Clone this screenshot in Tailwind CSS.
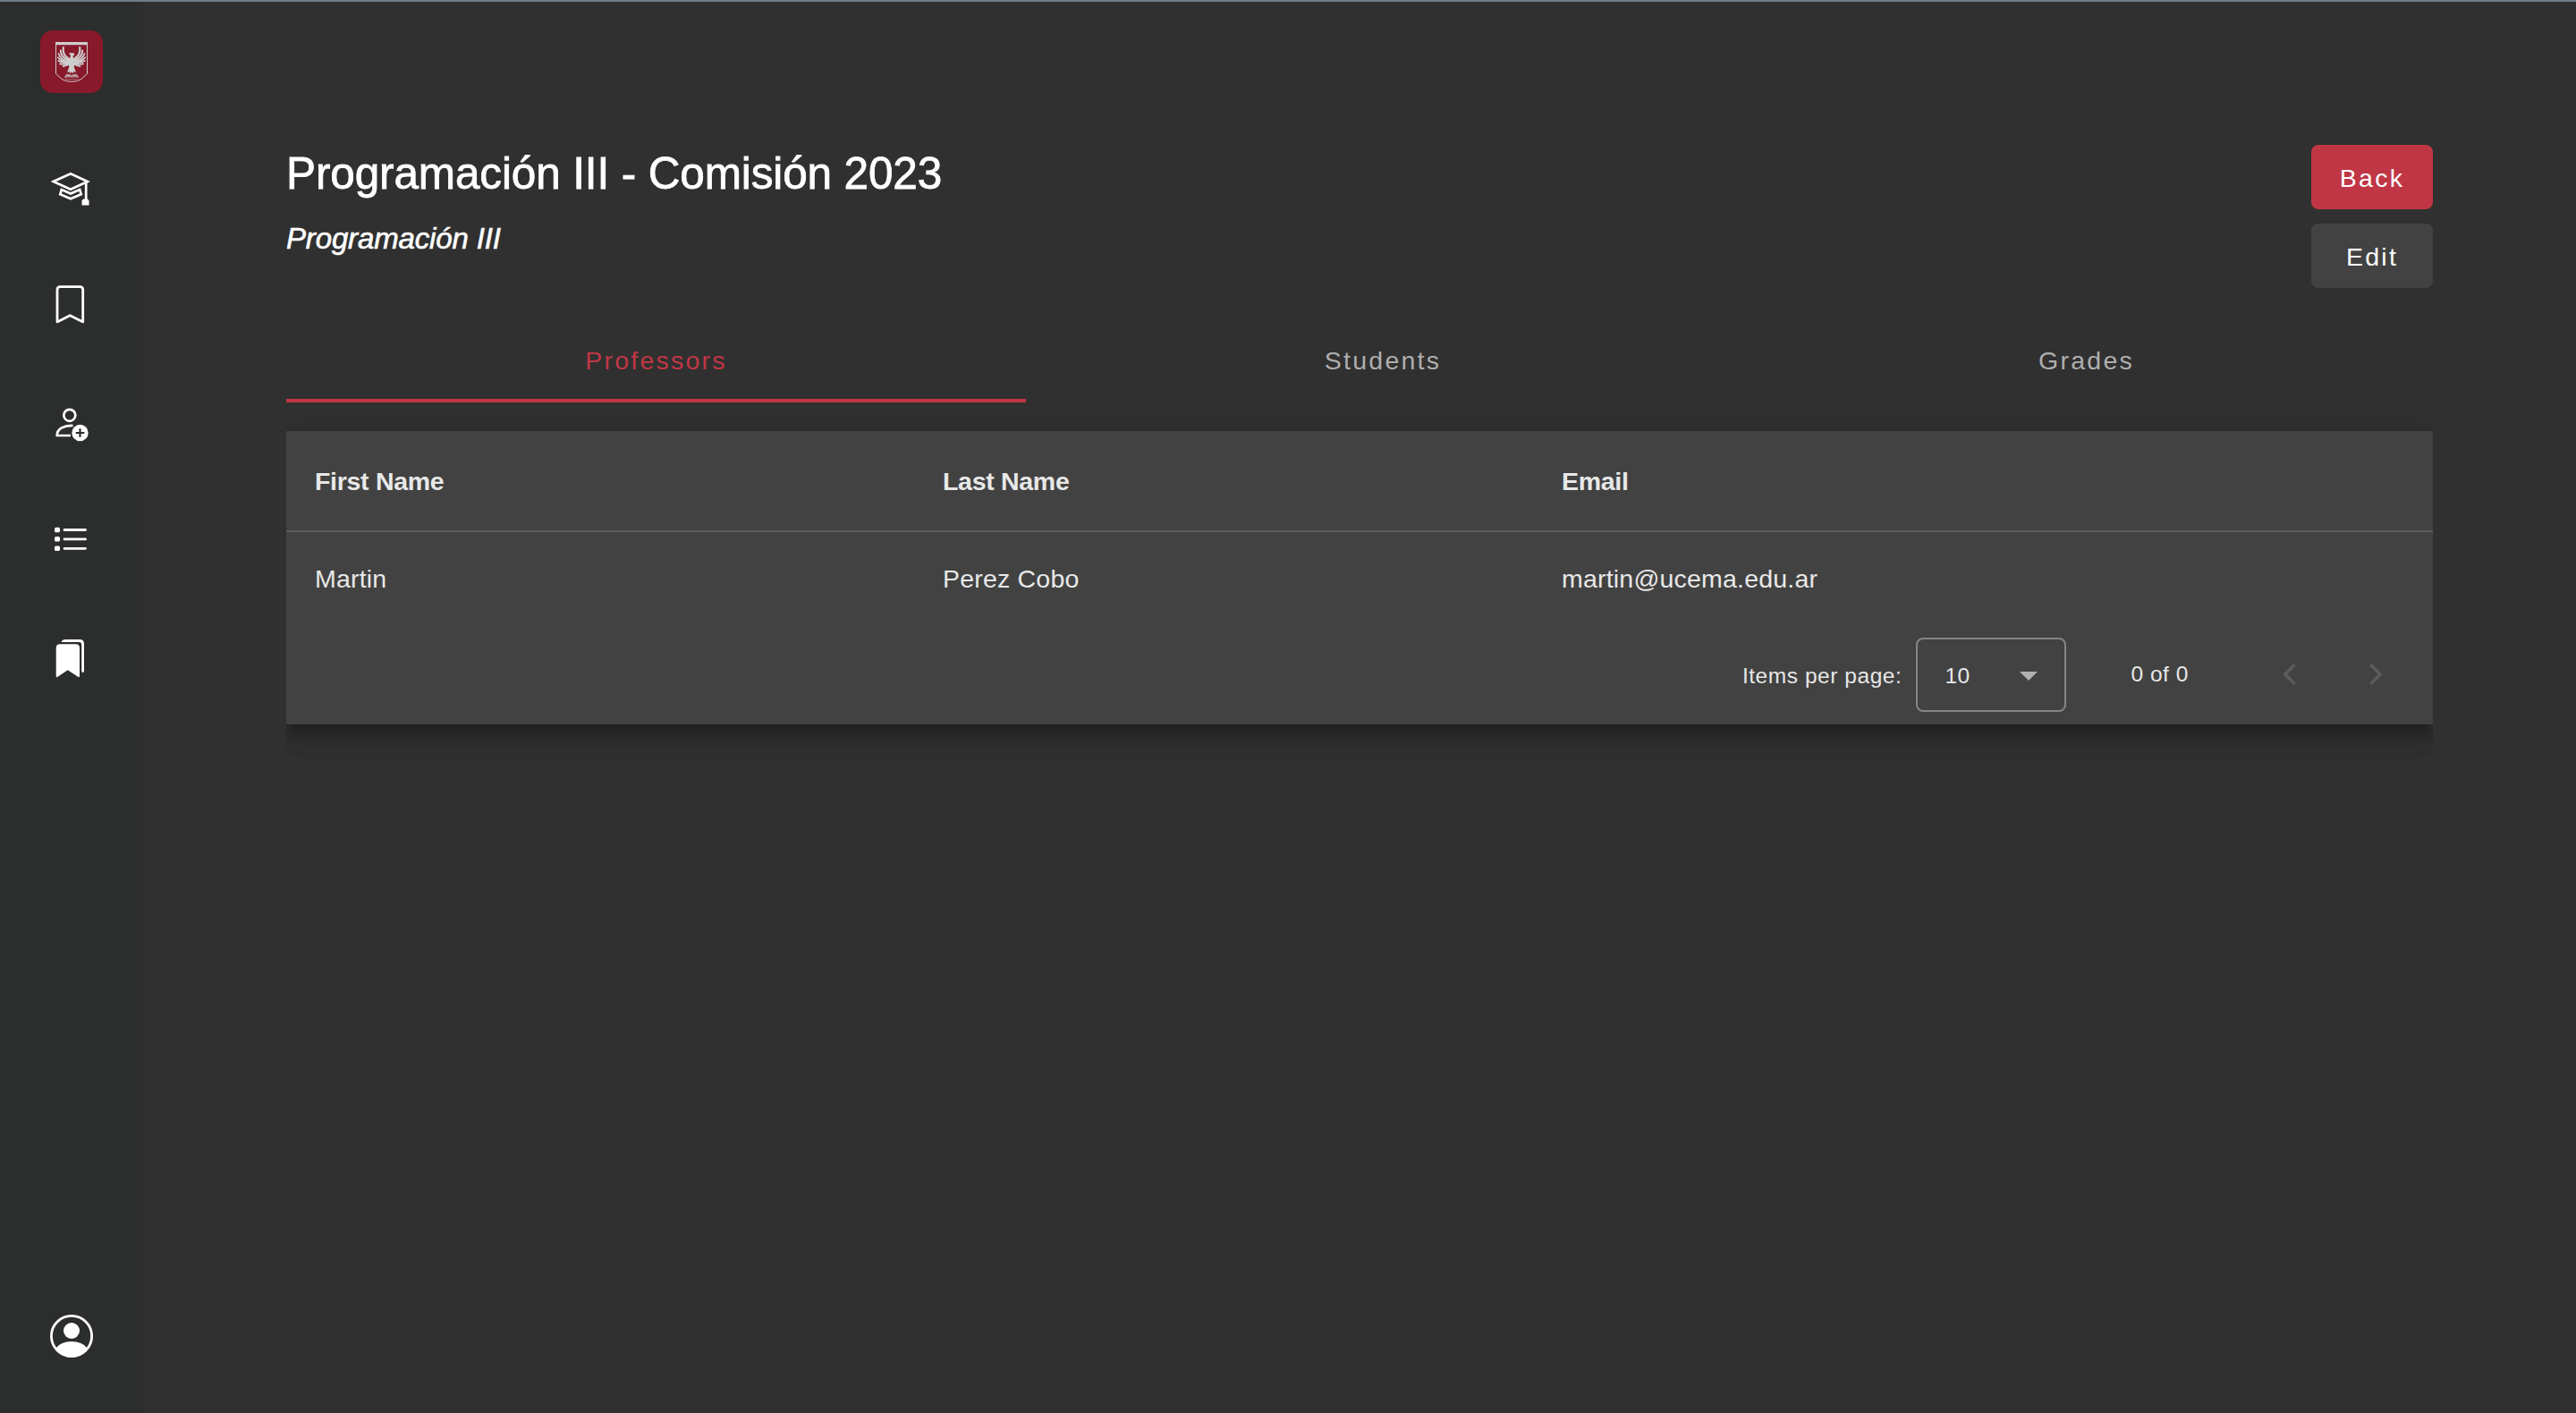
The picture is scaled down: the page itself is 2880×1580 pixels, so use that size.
<!DOCTYPE html>
<html lang="en">
<head>
<meta charset="utf-8">
<title>Programación III - Comisión 2023</title>
<script src="https://cdn.jsdelivr.net/npm/@tailwindcss/browser@4"></script>
</head>
<body class="bg-[#303030] text-white font-['Liberation_Sans',Arial,sans-serif]">
<div class="flex h-[1580px] w-[2880px] overflow-hidden border-t-2 border-[#6f7d86]">
  <aside class="flex w-40 shrink-0 flex-col items-center bg-[#2c2e2d] pt-8">
    <div class="flex size-[70px] items-center justify-center rounded-[14px] bg-[#87192a]">
      <svg class="h-[45px] w-9" viewBox="0 0 36 45" fill="#cecdcd">
        <defs>
          <g id="wing" fill="none" stroke="#cecdcd" stroke-width="1.7" stroke-linecap="round">
            <path d="M8.800 6Q7.500 14 14.500 18.500" stroke-width="2.200"/>
            <path d="M5.800 9.500Q5.500 16 14 20.500" stroke-width="2"/>
            <path d="M3.500 13Q5 19 14 22M2.800 17.200Q6 21.500 14 22.500M3.200 21Q8 23.800 14 23M5 24.400Q9 25.500 15 23.500M8.500 27.200Q12 26.800 16 24"/>
          </g>
        </defs>
        <path d="M.5.5h35v35L28 42q-4 2.300-10 2.300T8 42L.5 35.500z" fill="none" stroke="#cecdcd" stroke-width="1"/>
        <path d="M0 0h36v3.200H0z"/>
        <use href="#wing"/>
        <use href="#wing" transform="matrix(-1 0 0 1 36 0)"/>
        <path d="M14.500 13l2.500-1 4 .6v2.200l-1.500 1 .5 2.200 2.500 1.500-1.500 7.500-3 2-3-2-1.500-7.500 3-2 .3-3.200z"/>
        <path d="M16 26L13 34l2.500-1 .8 2 1.700-1.500 1.700 1.500.8-2 2.500 1L20 26z"/>
        <path d="M9.500 40l2.500-4q4-.6 6 1.200Q20 35.400 24 36l2.500 4q-5-1.200-8.500-.4-3.500-.8-8.500.4z" opacity=".7"/>
        <path d="M11 41.500h14" stroke="#cecdcd" stroke-width=".9" stroke-dasharray="2 .6" opacity=".6"/>
      </svg>
    </div>
    <svg class="mt-[87px] ml-[-3px] h-[40px] w-[44px]" viewBox="56.500 190.500 44 40" fill="none" stroke="#fff" stroke-width="2.700">
      <path d="M59 202.500L78.500 193.800 97.500 202.500 78.500 211.200z"/>
      <path d="M68.300 211.500l-1.500 5.200 11.700 5 11.700-5-1.500-5.200-10.200 4.600z"/>
      <path d="M95.700 203v20"/>
      <path d="M92.500 222h5l1.500 2v5h-8v-5z" fill="#fff" stroke="none"/>
    </svg>
    <svg class="mt-[87px] ml-[-4px] h-[44px] w-[34px]" viewBox="61 317.500 34 44" fill="none" stroke="#fff" stroke-width="2.800" stroke-linejoin="round">
      <path d="M64 359.400V323.500q0-3.300 3.300-3.300H89.400q3.300 0 3.300 3.300V359.400L78.300 352.200z"/>
    </svg>
    <svg class="mt-[94px] h-[40px] w-[40px]" viewBox="60.500 456 40 40" fill="none" stroke="#fff" stroke-width="2.700">
      <circle cx="78.300" cy="464.300" r="6.500"/>
      <path d="M79.500 487H64.300Q64 482 69 478.700 74.500 475.500 82 476"/>
      <circle cx="90" cy="484" r="9.200" fill="#fff" stroke="none"/>
      <path d="M90 479.200v9.600M85.200 484h9.600" stroke="#2c2e2d" stroke-width="2.200"/>
    </svg>
    <svg class="mt-[92px] ml-[-3px] h-[30px] w-[40px]" viewBox="59 588 40 30" fill="#fff" stroke="#fff">
      <g stroke="none"><rect x="61" y="589.700" width="6" height="5.600" rx="1.500"/><rect x="61" y="600" width="6" height="5.600" rx="1.500"/><rect x="61" y="610.400" width="6" height="5.600" rx="1.500"/></g>
      <path d="M72 592.500H95.500M72 602.900H95.500M72 613.300H95.500" stroke-width="2.800" stroke-linecap="round"/>
    </svg>
    <svg class="mt-[96px] ml-[-4px] h-[44px] w-[34px]" viewBox="61 714 34 44" fill="#fff">
      <path d="M62.700 756V724.500q0-4.300 4.300-4.300h17.700q4.300 0 4.300 4.300V756q0 1.500-1.500 1L75.700 749.300 64.200 757q-1.500.5-1.500-1z"/>
      <path d="M68.500 718q1-3 5-3h15.500q5 0 5 5v30q0 2-1.400 2t-1.400-2V721q0-3-3-3z"/>
    </svg>
    <svg class="mt-[711px] h-[50px] w-[50px]" viewBox="0 0 50 50">
      <circle cx="25" cy="25" r="22.600" fill="none" stroke="#fff" stroke-width="2.800"/>
      <circle cx="25" cy="19" r="9" fill="#fff"/>
      <path d="M7.500 38.500Q13 31 25 31t17.500 7.500Q36 49 25 49T7.500 38.500z" fill="#fff"/>
    </svg>
  </aside>
  <main class="flex-1 px-40 pt-40">
    <header class="flex justify-between">
      <div class="pt-1">
        <h1 class="text-[49.5px] leading-[56px] tracking-[-0.13px] [-webkit-text-stroke:0.8px_white]">Programación III - Comisión 2023</h1>
        <p class="mt-[27px] text-[33px] leading-[36px] tracking-[-0.15px] italic [-webkit-text-stroke:0.6px_white]">Programación III</p>
      </div>
      <div class="flex w-[136px] flex-col gap-4">
        <button class="h-[72px] rounded-lg bg-[#c03645] pt-0.5 text-[28.5px] tracking-[2.25px]">Back</button>
        <button class="h-[72px] rounded-lg bg-[#424242] pt-0.5 text-[28.5px] tracking-[2.25px]">Edit</button>
      </div>
    </header>
    <nav class="mt-8 flex h-24 text-[28.5px] tracking-[2.25px] text-[#aeaeae]">
      <div class="flex w-[827px] items-center justify-center border-b-4 border-[#c03645] pt-1.5 text-[#c03645]">Professors</div>
      <div class="flex w-[798px] items-center justify-center border-b-4 border-transparent pt-1.5">Students</div>
      <div class="flex w-[775px] items-center justify-center border-b-4 border-transparent pt-1.5">Grades</div>
    </nav>
    <section class="overflow-hidden pt-8 pb-20">
      <div class="h-[328px] bg-[#424242] text-[28.5px] text-[#e8e8e8] shadow-[0_10px_10px_-6px_rgba(0,0,0,0.2),0_16px_20px_2px_rgba(0,0,0,0.14),0_6px_28px_4px_rgba(0,0,0,0.12)]">
        <div class="grid h-[113px] grid-cols-[702px_692px_1fr] items-center border-b-2 border-[#5b5b5b] pt-0.5 pl-8 font-bold tracking-[-0.3px]">
          <div>First Name</div><div>Last Name</div><div>Email</div>
        </div>
        <div class="grid h-[105px] grid-cols-[702px_692px_1fr] items-center pl-8 tracking-[0.2px]">
          <div>Martin</div><div>Perez Cobo</div><div>martin@ucema.edu.ar</div>
        </div>
        <div class="flex h-[108px] items-center justify-end text-[24.5px] tracking-[0.55px]">
          <div class="mr-4 pt-1">Items per page:</div>
          <div class="flex h-[83px] w-[168px] items-center justify-between rounded-lg border-2 border-[#868686] pr-[30px] pl-[30px]">
            <span class="pt-1">10</span>
            <svg class="mt-1 h-[10px] w-5" viewBox="0 0 20 10" fill="#b0b0b0"><path d="M0 0h20L10 10z"/></svg>
          </div>
          <div class="ml-[72px] pt-px">0 of 0</div>
          <svg class="ml-[105px] h-6 w-[15px]" viewBox="0 0 15 24" fill="none" stroke="#5c5c5c" stroke-width="3.600"><path d="M13.500 1.300L2.800 12l10.700 10.700"/></svg>
          <svg class="mr-14 ml-[82px] h-6 w-[15px]" viewBox="0 0 15 24" fill="none" stroke="#5c5c5c" stroke-width="3.600"><path d="M1.500 1.300L12.200 12 1.500 22.700"/></svg>
        </div>
      </div>
    </section>
  </main>
</div>
</body>
</html>
